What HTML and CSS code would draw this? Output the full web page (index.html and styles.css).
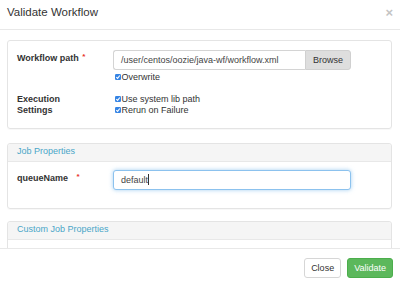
FILE: index.html
```html
<!DOCTYPE html>
<html lang="en">
<head>
    <meta charset="UTF-8">
    <title>Validate Workflow</title>
    <link rel="stylesheet" href="styles.css">
</head>
<body>
    <div class="modal">
        <div class="modal-header">
            <h4 class="modal-title">Validate Workflow</h4>
            <span class="close">&times;</span>
        </div>

        <div class="modal-body">
            <div class="panel panel-main">
                <div class="panel-body">
                    <div class="form-row">
                        <label class="form-label">Workflow path <span class="req">*</span></label>
                        <div class="form-field">
                            <div class="input-group">
                                <div class="form-control">/user/centos/oozie/java-wf/workflow.xml</div>
                                <button class="btn btn-browse">Browse</button>
                            </div>
                            <label class="check check-first">
                                <svg class="box" width="6" height="6" viewBox="0 0 6 6"><rect width="6" height="6" rx="1.2" fill="#3584e4"/><path d="M1.3 3.1 L2.6 4.4 L4.8 1.5" fill="none" stroke="#fff" stroke-width="1.1"/></svg>Overwrite
                            </label>
                        </div>
                    </div>
                    <div class="form-row exec-row">
                        <label class="form-label">Execution<br>Settings</label>
                        <div class="form-field">
                            <label class="check">
                                <svg class="box" width="6" height="6" viewBox="0 0 6 6"><rect width="6" height="6" rx="1.2" fill="#3584e4"/><path d="M1.3 3.1 L2.6 4.4 L4.8 1.5" fill="none" stroke="#fff" stroke-width="1.1"/></svg>Use system lib path
                            </label>
                            <label class="check">
                                <svg class="box" width="6" height="6" viewBox="0 0 6 6"><rect width="6" height="6" rx="1.2" fill="#3584e4"/><path d="M1.3 3.1 L2.6 4.4 L4.8 1.5" fill="none" stroke="#fff" stroke-width="1.1"/></svg>Rerun on Failure
                            </label>
                        </div>
                    </div>
                </div>
            </div>

            <div class="panel panel-job">
                <div class="panel-heading">Job Properties</div>
                <div class="panel-body panel-body-job">
                    <div class="form-row">
                        <label class="form-label">queueName <span class="req req-wide">*</span></label>
                        <div class="form-field">
                            <div class="form-control focused">default<span class="caret"></span></div>
                        </div>
                    </div>
                </div>
            </div>

            <div class="panel panel-custom">
                <div class="panel-heading">Custom Job Properties</div>
                <div class="panel-body panel-body-custom"></div>
            </div>
        </div>

        <div class="modal-footer">
            <button class="btn btn-default">Close</button>
            <button class="btn btn-success">Validate</button>
        </div>
    </div>
</body>
</html>
```

FILE: styles.css
```css
body {
    margin: 0;
    background: #fff;
    font-family: 'Liberation Sans', Arial, sans-serif;
    font-size: 9px;
    color: #333;
}
.modal {
    width: 400px;
    height: 287px;
    display: flex;
    flex-direction: column;
    background: #fff;
}
.modal-header {
    box-sizing: border-box;
    height: 30px;
    padding: 6px 7px 0 7px;
    border-bottom: 1px solid #e8e8e8;
    display: flex;
    justify-content: space-between;
    align-items: flex-start;
}
.modal-title {
    margin: 0;
    font-size: 11.5px;
    line-height: 13px;
    font-weight: normal;
    color: #333;
}
.close {
    font-size: 13px;
    line-height: 13px;
    font-weight: bold;
    color: #c4c4c4;
}
.modal-body {
    box-sizing: border-box;
    height: 218px;
    overflow: hidden;
    padding: 10px 8px 0 7px;
}
.panel {
    border: 1px solid #e4e4e4;
    border-radius: 3px;
    box-shadow: 0 1px 1px rgba(0, 0, 0, 0.03);
}
.panel-job {
    margin-top: 14px;
}
.panel-custom {
    margin-top: 12px;
}
.panel-heading {
    box-sizing: border-box;
    height: 18px;
    padding: 2.5px 9px 0;
    line-height: 11.5px;
    background: #f5f5f5;
    border-bottom: 1px solid #e8e8e8;
    color: #4aa6c8;
    border-radius: 3px 3px 0 0;
}
.panel-body {
    padding: 9px 9px 11px;
}
.panel-body-job {
    padding-top: 8px;
    padding-bottom: 18px;
}
.panel-body-custom {
    height: 40px;
}
.form-row {
    display: grid;
    grid-template-columns: 96px 1fr;
}
.exec-row {
    margin-top: 10px;
}
.form-label {
    font-weight: bold;
    line-height: 11.5px;
    padding-top: 1px;
}
.exec-row .form-label {
    padding-top: 0;
}
.req {
    color: #e8302a;
    font-size: 8px;
    vertical-align: 2px;
    margin-left: 1px;
}
.req-wide {
    margin-left: 6px;
}
.form-field {
    display: flex;
    flex-direction: column;
    align-items: flex-start;
}
.input-group {
    display: flex;
    width: 238px;
}
.form-control {
    box-sizing: border-box;
    width: 238px;
    height: 20px;
    padding: 0 7px;
    line-height: 18px;
    border: 1px solid #d4d4d4;
    border-radius: 3px;
    background: #fff;
    color: #444;
    white-space: nowrap;
}
.input-group .form-control {
    flex: 1;
    border-radius: 3px 0 0 3px;
    border-right: none;
}
.focused {
    border-color: #8cc2ee;
    box-shadow: 0 0 4px rgba(102, 175, 233, 0.6);
}
.caret {
    display: inline-block;
    width: 1px;
    height: 11px;
    background: #333;
    vertical-align: -2px;
}
.check {
    display: block;
    line-height: 11.5px;
    color: #333;
}
.check-first {
    margin-top: 2px;
}
.box {
    margin-left: 2px;
    margin-right: 0.5px;
}
.btn {
    box-sizing: border-box;
    height: 20px;
    padding: 0 6px;
    font-family: 'Liberation Sans', Arial, sans-serif;
    font-size: 9px;
    border: 1px solid #ccc;
    border-radius: 3px;
    cursor: pointer;
}
.btn-browse {
    padding: 0 7px;
    background: #dedede;
    border-color: #d0d0d0;
    border-radius: 0 3px 3px 0;
    color: #333;
}
.modal-footer {
    box-sizing: border-box;
    height: 39px;
    border-top: 1px solid #e8e8e8;
    padding: 9px 7px;
    display: flex;
    justify-content: flex-end;
    gap: 6px;
}
.btn-default {
    background: #fff;
    color: #333;
    border-color: #d6d6d6;
}
.btn-success {
    background: #5cb85c;
    border-color: #4cae4c;
    color: #fff;
}
```
